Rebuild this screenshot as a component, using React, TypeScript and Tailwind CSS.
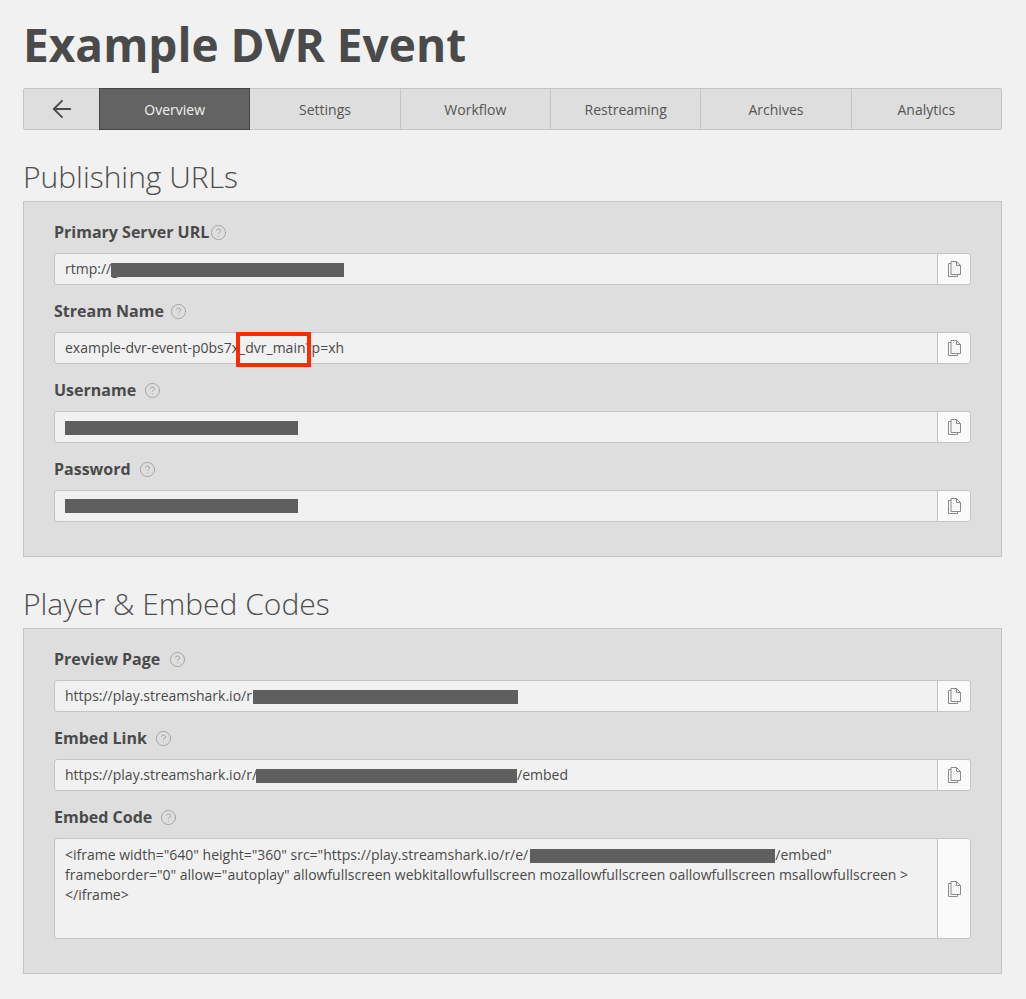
import { ReactNode } from 'react';
import { ArrowLeft, CircleHelp } from 'lucide-react';

const tabs = ['Overview', 'Settings', 'Workflow', 'Restreaming', 'Archives', 'Analytics'];

function Bar({ className }: { className: string }) {
    return <span className={`inline-block h-[14px] bg-[#5f5f5f] align-middle ${className}`} />;
}

function CopyIcon() {
    return (
        <svg width="13" height="16" viewBox="0 0 13 16" fill="none" stroke="#8a8a8a" strokeWidth="1">
            <path d="M3 2.5H0.5V15.5H9.5V13" />
            <path d="M3 0.5H8.5L12.5 4.5V13.5H3Z" fill="#f6f6f6" />
            <path d="M8.5 0.5V4.5H12.5" />
        </svg>
    );
}

function Field({ label, gap, children, tall }: { label: string; gap: string; children: ReactNode; tall?: boolean }) {
    return (
        <div className="mb-[15px]">
            <div className="flex items-center h-[22px] mb-[10px] text-[16px] font-bold text-[#4a4a4a]">
                <span>{label}</span>
                <CircleHelp className={`w-[17px] h-[17px] text-[#8f8f8f] ${gap}`} strokeWidth={1} />
            </div>
            <div className={`flex border border-[#c4c4c4] rounded-[3px] bg-[#f1f1f1] text-[14px] text-[#4a4a4a] ${tall ? 'h-[101px]' : 'h-[32px]'}`}>
                <div className={`relative flex-1 min-w-0 px-[10px] ${tall ? 'pt-[6px] leading-[20px]' : 'leading-[30px] whitespace-nowrap'}`}>
                    {children}
                </div>
                <div className="w-[33px] shrink-0 flex items-center justify-center border-l border-[#c4c4c4] bg-[#fafafa] rounded-r-[3px]">
                    <CopyIcon />
                </div>
            </div>
        </div>
    );
}

export default function App() {
    return (
        <div className="min-h-[999px] bg-[#f1f1f1] pl-[23px] pr-[24px] pt-[16px] font-['Open_Sans',sans-serif] text-[#4a4a4a] overflow-hidden">
            <h1 className="text-[46px] font-bold leading-[56px] mb-[16px]">Example DVR Event</h1>

            <nav className="flex h-[42px] border border-[#c4c4c4] rounded-[2px] bg-[#dedede] text-[14px] text-[#555]">
                <div className="w-[75px] shrink-0 flex items-center justify-center">
                    <ArrowLeft className="w-[28px] h-[28px] text-[#4a4a4a]" strokeWidth={1.6} />
                </div>
                {tabs.map((tab, i) => (
                    <div
                        key={tab}
                        className={
                            i === 0
                                ? 'flex-1 flex items-center justify-center -my-px border border-[#454545] bg-[#636363] text-[#f1f1f1]'
                                : `flex-1 flex items-center justify-center ${i > 1 ? 'border-l border-[#c4c4c4]' : ''}`
                        }
                    >
                        {tab}
                    </div>
                ))}
            </nav>

            <h2 className="mt-[27px] mb-[4px] text-[30px] font-light leading-[40px] text-[#4d4d4d]">Publishing URLs</h2>
            <section className="border border-[#c4c4c4] bg-[#dedede] px-[30px] pt-[19px] pb-[19px]">
                <Field label="Primary Server URL" gap="ml-[1px]">
                    rtmp://g<Bar className="w-[233px] -ml-[8px]" />
                </Field>
                <Field label="Stream Name" gap="ml-[6px]">
                    example-dvr-event-p0bs7x_dvr_main?p=xh
                    <span className="absolute left-[181px] -top-px w-[75px] h-[35px] border-4 border-[#ff2a00]" />
                </Field>
                <Field label="Username" gap="ml-[8px]">
                    <Bar className="w-[233px]" />
                </Field>
                <Field label="Password" gap="ml-[8px]">
                    <Bar className="w-[233px] mb-[2px]" />
                </Field>
            </section>

            <h2 className="mt-[27px] mb-[4px] text-[30px] font-light leading-[40px] text-[#4d4d4d]">Player &amp; Embed Codes</h2>
            <section className="border border-[#c4c4c4] bg-[#dedede] px-[30px] pt-[19px] pb-[19px]">
                <Field label="Preview Page" gap="ml-[9px]">
                    https://play.streamshark.io/r<Bar className="w-[265px] ml-[1px]" />
                </Field>
                <Field label="Embed Link" gap="ml-[8px]">
                    https://play.streamshark.io/r/<Bar className="w-[261px] -ml-[1px]" />/embed
                </Field>
                <Field label="Embed Code" gap="ml-[8px]" tall>
                    &lt;iframe width="640" height="360" src="https://play.streamshark.io/r/e/<Bar className="w-[245px] ml-[2px]" />/embed"
                    <br />
                    frameborder="0" allow="autoplay" allowfullscreen webkitallowfullscreen mozallowfullscreen oallowfullscreen msallowfullscreen &gt;
                    <br />
                    &lt;/iframe&gt;
                </Field>
            </section>
        </div>
    );
}
